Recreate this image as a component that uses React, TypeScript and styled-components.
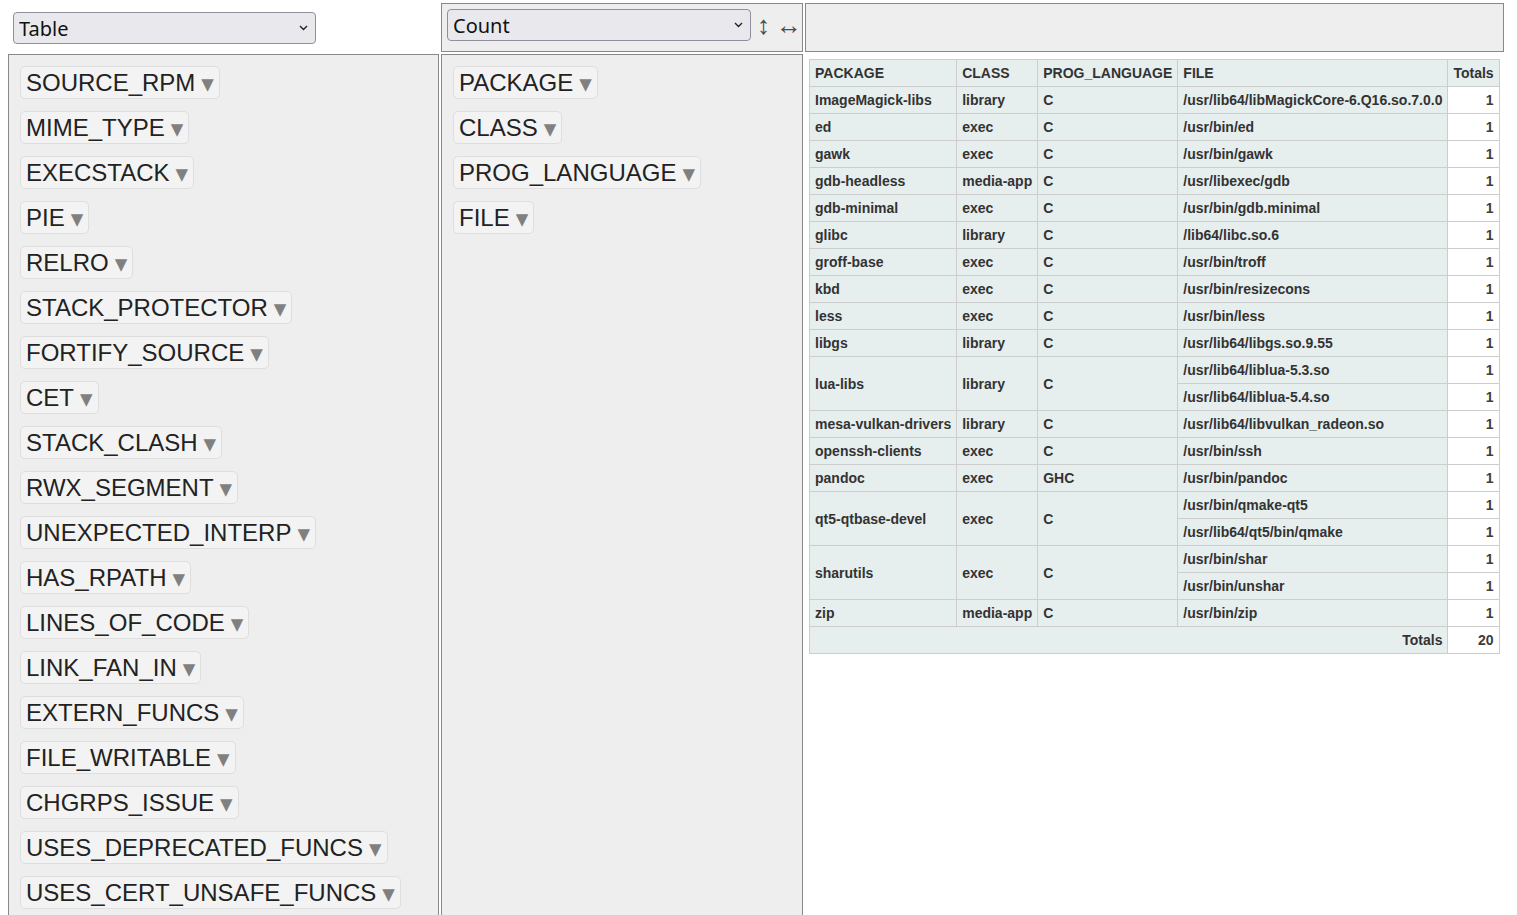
import styled, { createGlobalStyle } from "styled-components";

const GlobalStyle = createGlobalStyle`
    body {
        margin: 0;
        background: #fff;
        font-family: "Liberation Sans", Arial, sans-serif;
    }
`

const PivotUi = styled.div`
    display: grid;
    grid-template-columns: 431px 362px 699px;
    grid-template-rows: 49px auto;
    gap: 2px;
    padding: 3px 0 0 8px;
`

const RendererCell = styled.div`
    padding: 9px 0 0 5px;
`

const ValsCell = styled.div`
    display: flex;
    align-items: flex-start;
    padding: 5px 0 0 5px;
    background: #eee;
    border: 1px solid #888;
`

const AxisContainer = styled.div`
    display: flex;
    flex-direction: column;
    align-items: flex-start;
    gap: 12px;
    padding: 11px;
    background: #eee;
    border: 1px solid #888;
`

const ColsCell = styled.div`
    background: #eee;
    border: 1px solid #888;
`

const OutputCell = styled.div`
    padding: 5px 0 0 4px;
`

const SelectWrap = styled.div<{ $width: number }>`
    position: relative;
    width: ${p => p.$width}px;
    height: 32px;
`

const Select = styled.select`
    appearance: none;
    width: 100%;
    height: 100%;
    margin: 0;
    padding: 0 24px 0 5px;
    border: 1px solid #8f8f9d;
    border-radius: 4px;
    background: #e9e9ed;
    color: #111;
    font-family: "Noto Sans", "Open Sans", sans-serif;
    font-size: 20px;
`

const Chevron = styled.svg`
    position: absolute;
    right: 8px;
    top: 13px;
    pointer-events: none;
`

const OrderArrow = styled.span<{ $left: number }>`
    margin-left: ${p => p.$left}px;
    color: #4a4a4a;
    font-size: 26px;
    line-height: 32px;
    cursor: pointer;
`

const Attr = styled.span`
    display: inline-flex;
    align-items: center;
    gap: 6px;
    height: 27px;
    padding: 2px 5px;
    background: #f3f3f3;
    border: 1px solid #dedede;
    border-radius: 5px;
    color: #222;
    font-size: 24px;
    line-height: 27px;
    white-space: nowrap;
`

const Triangle = styled.span`
    margin-top: 3px;
    color: grey;
    font-family: "DejaVu Sans", sans-serif;
    font-size: 25px;
    line-height: 20px;
    cursor: pointer;
`

const PivotTable = styled.table`
    border-collapse: collapse;
    font-family: "Liberation Sans", Arial, sans-serif;
    font-size: 14px;
    font-weight: 700;
    line-height: 16px;
    text-align: left;
`

const HeadCell = styled.th<{ $right?: boolean }>`
    padding: 5px;
    background: #e6eeee;
    border: 1px solid #cdcdcd;
    color: #333;
    text-align: ${p => (p.$right ? "right" : "left")};
    vertical-align: middle;
    white-space: nowrap;
`

const ValueCell = styled.td`
    padding: 5px;
    background: #fff;
    border: 1px solid #cdcdcd;
    color: #3d3d3d;
    text-align: right;
`

type Row = { pkg: string; cls: string; lang: string; files: string[] }

const unused = [
    "SOURCE_RPM", "MIME_TYPE", "EXECSTACK", "PIE", "RELRO", "STACK_PROTECTOR",
    "FORTIFY_SOURCE", "CET", "STACK_CLASH", "RWX_SEGMENT", "UNEXPECTED_INTERP",
    "HAS_RPATH", "LINES_OF_CODE", "LINK_FAN_IN", "EXTERN_FUNCS", "FILE_WRITABLE",
    "CHGRPS_ISSUE", "USES_DEPRECATED_FUNCS", "USES_CERT_UNSAFE_FUNCS",
]

const rowAttrs = ["PACKAGE", "CLASS", "PROG_LANGUAGE", "FILE"]

const rows: Row[] = [
    { pkg: "ImageMagick-libs", cls: "library", lang: "C", files: ["/usr/lib64/libMagickCore-6.Q16.so.7.0.0"] },
    { pkg: "ed", cls: "exec", lang: "C", files: ["/usr/bin/ed"] },
    { pkg: "gawk", cls: "exec", lang: "C", files: ["/usr/bin/gawk"] },
    { pkg: "gdb-headless", cls: "media-app", lang: "C", files: ["/usr/libexec/gdb"] },
    { pkg: "gdb-minimal", cls: "exec", lang: "C", files: ["/usr/bin/gdb.minimal"] },
    { pkg: "glibc", cls: "library", lang: "C", files: ["/lib64/libc.so.6"] },
    { pkg: "groff-base", cls: "exec", lang: "C", files: ["/usr/bin/troff"] },
    { pkg: "kbd", cls: "exec", lang: "C", files: ["/usr/bin/resizecons"] },
    { pkg: "less", cls: "exec", lang: "C", files: ["/usr/bin/less"] },
    { pkg: "libgs", cls: "library", lang: "C", files: ["/usr/lib64/libgs.so.9.55"] },
    { pkg: "lua-libs", cls: "library", lang: "C", files: ["/usr/lib64/liblua-5.3.so", "/usr/lib64/liblua-5.4.so"] },
    { pkg: "mesa-vulkan-drivers", cls: "library", lang: "C", files: ["/usr/lib64/libvulkan_radeon.so"] },
    { pkg: "openssh-clients", cls: "exec", lang: "C", files: ["/usr/bin/ssh"] },
    { pkg: "pandoc", cls: "exec", lang: "GHC", files: ["/usr/bin/pandoc"] },
    { pkg: "qt5-qtbase-devel", cls: "exec", lang: "C", files: ["/usr/bin/qmake-qt5", "/usr/lib64/qt5/bin/qmake"] },
    { pkg: "sharutils", cls: "exec", lang: "C", files: ["/usr/bin/shar", "/usr/bin/unshar"] },
    { pkg: "zip", cls: "media-app", lang: "C", files: ["/usr/bin/zip"] },
]

function DropDown({ width, value }: { width: number; value: string }) {
    return (
        <SelectWrap $width={width}>
            <Select defaultValue={value}>
                <option>{value}</option>
            </Select>
            <Chevron width="9" height="6" viewBox="0 0 9 6">
                <path d="M1 1l3.5 3.5L8 1" fill="none" stroke="#222" strokeWidth="1.4" />
            </Chevron>
        </SelectWrap>
    )
}

function AttrChip({ name }: { name: string }) {
    return (
        <Attr>
            {name}
            <Triangle>▾</Triangle>
        </Attr>
    )
}

function App() {
    const total = rows.reduce((n, r) => n + r.files.length, 0)

    return (
        <>
            <GlobalStyle />
            <PivotUi>
                <RendererCell>
                    <DropDown width={303} value="Table" />
                </RendererCell>
                <ValsCell>
                    <DropDown width={308} value="Count" />
                    <OrderArrow $left={6}>↕</OrderArrow>
                    <OrderArrow $left={6}>↔</OrderArrow>
                </ValsCell>
                <ColsCell />

                <AxisContainer>
                    {unused.map(a => <AttrChip key={a} name={a} />)}
                </AxisContainer>
                <AxisContainer>
                    {rowAttrs.map(a => <AttrChip key={a} name={a} />)}
                </AxisContainer>
                <OutputCell>
                    <PivotTable>
                        <thead>
                            <tr>
                                {rowAttrs.map(a => <HeadCell key={a}>{a}</HeadCell>)}
                                <HeadCell $right>Totals</HeadCell>
                            </tr>
                        </thead>
                        <tbody>
                            {rows.map(r =>
                                r.files.map((f, i) => (
                                    <tr key={f}>
                                        {i === 0 && (
                                            <>
                                                <HeadCell rowSpan={r.files.length}>{r.pkg}</HeadCell>
                                                <HeadCell rowSpan={r.files.length}>{r.cls}</HeadCell>
                                                <HeadCell rowSpan={r.files.length}>{r.lang}</HeadCell>
                                            </>
                                        )}
                                        <HeadCell>{f}</HeadCell>
                                        <ValueCell>1</ValueCell>
                                    </tr>
                                ))
                            )}
                            <tr>
                                <HeadCell colSpan={4} $right>Totals</HeadCell>
                                <ValueCell>{total}</ValueCell>
                            </tr>
                        </tbody>
                    </PivotTable>
                </OutputCell>
            </PivotUi>
        </>
    )
}

export default App
